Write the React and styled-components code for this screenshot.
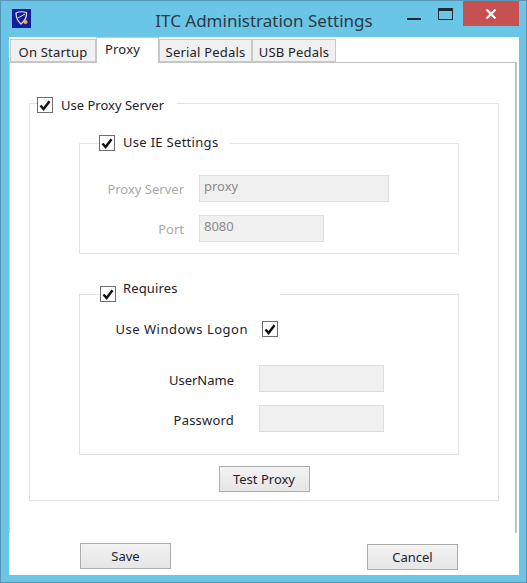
import React from 'react';
import styled, { createGlobalStyle } from 'styled-components';

const GlobalStyle = createGlobalStyle`
  html, body {
    margin: 0;
    padding: 0;
    background: #6bc5e6;
  }
`;

const Window = styled.div`
  box-sizing: border-box;
  width: 527px;
  height: 583px;
  display: flex;
  flex-direction: column;
  background: #6bc5e6;
  border: 1px solid #5597b4;
  font-family: "Noto Sans", "Open Sans", sans-serif;
  font-size: 13px;
  color: #22222a;
`;

const TitleBar = styled.div`
  position: relative;
  height: 36px;
  flex: none;
  display: flex;
  align-items: center;
  justify-content: center;
`;

const AppIcon = styled.svg`
  position: absolute;
  left: 11px;
  top: 8px;
`;

const Title = styled.div`
  font-size: 17px;
  color: #2c3a44;
  margin-top: 2px;
  margin-left: 1px;
`;

const Controls = styled.div`
  position: absolute;
  right: 7px;
  top: 0;
  display: flex;
  align-items: flex-start;
`;

const Minimize = styled.div`
  width: 14px;
  height: 2px;
  margin: 17px 17px 0 0;
  background: #1c2a33;
`;

const Maximize = styled.div`
  box-sizing: border-box;
  width: 15px;
  height: 12px;
  margin: 7px 10px 0 0;
  border: 1px solid #1c2a33;
  border-top-width: 3px;
`;

const Close = styled.div`
  width: 56px;
  height: 25px;
  background: #c75050;
  display: flex;
  align-items: center;
  justify-content: center;
`;

const Client = styled.div`
  flex: 1;
  margin: 0 7px 7px 8px;
  background: #fff;
  display: flex;
  flex-direction: column;
  min-height: 0;
`;

const TabStrip = styled.div`
  height: 25px;
  flex: none;
  display: flex;
  align-items: flex-end;
  padding-left: 1px;
  position: relative;
  z-index: 1;
`;

const Tab = styled.div`
  box-sizing: border-box;
  width: ${p => p.$width}px;
  height: ${p => (p.$active ? 26 : 23)}px;
  margin-bottom: ${p => (p.$active ? -1 : 0)}px;
  display: flex;
  justify-content: center;
  padding-top: ${p => (p.$active ? 2 : 3)}px;
  padding-right: ${p => (p.$active ? 10 : 0)}px;
  background: ${p => (p.$active ? '#fff' : '#f0f0f0')};
  border: 1px solid #c8c8c8;
  border-bottom: ${p => (p.$active ? 'none' : '1px solid #c8c8c8')};
  letter-spacing: 0.2px;
  white-space: nowrap;
`;

const TabPage = styled.div`
  box-sizing: border-box;
  height: 471px;
  flex: none;
  margin-right: 2px;
  padding: 34px 18px 0 19px;
  border-top: 1px solid #c4c4c4;
  border-left: 1px solid #d0d0d0;
  border-right: 2px solid #c4c4c4;
`;

const Group = styled.fieldset`
  box-sizing: border-box;
  margin: 0;
  width: ${p => p.$width}px;
  height: ${p => p.$height}px;
  min-width: 0;
  padding: 0;
  border: 1px solid #e3e3e3;
  display: flex;
  flex-direction: column;
`;

const Legend = styled.legend`
  box-sizing: border-box;
  width: ${p => p.$width}px;
  height: ${p => p.$height || 16}px;
  margin-left: ${p => p.$left}px;
  padding: 0;
  display: flex;
  align-items: flex-start;
  gap: ${p => p.$gap || 8}px;
  background: #fff;
  line-height: 16px;
`;

const LegendText = styled.span`
  position: relative;
  top: ${p => p.$raise || 0}px;
  letter-spacing: ${p => p.$spacing || 0}px;
  white-space: nowrap;
`;

const Box = styled.span`
  box-sizing: border-box;
  width: 16px;
  height: 16px;
  flex: none;
  display: flex;
  align-items: center;
  justify-content: center;
  background: #fff;
  border: 1px solid #6e6e6e;
`;

const Check = () => (
  <Box>
    <svg width="12" height="11" viewBox="0 0 12 11">
      <path d="M1.5 5.5 L4.6 9 L10.5 1.2" fill="none" stroke="#111" strokeWidth="2.5" />
    </svg>
  </Box>
);

const Row = styled.div`
  display: flex;
  align-items: center;
  height: 27px;
  margin-top: ${p => p.$top}px;
`;

const Label = styled.div`
  width: ${p => p.$width}px;
  padding-top: ${p => p.$drop || 0}px;
  text-align: right;
  letter-spacing: ${p => p.$spacing || 0}px;
  white-space: nowrap;
  color: ${p => (p.$disabled ? '#a9a9a9' : 'inherit')};
`;

const Field = styled.div`
  box-sizing: border-box;
  width: ${p => p.$width}px;
  height: 27px;
  margin-left: ${p => p.$gap}px;
  padding: 0 0 5px 4px;
  display: flex;
  align-items: center;
  background: #f0f0f0;
  border: 1px solid #dedede;
  color: #8b8b8b;
`;

const LogonRow = styled.div`
  display: flex;
  align-items: center;
  height: 16px;
  margin: 19px 0 0 34px;
`;

const LogonBox = styled.div`
  margin-left: 14px;
`;

const GroupGap = styled.div`
  height: ${p => p.$height}px;
`;

const CenterRow = styled.div`
  display: flex;
  justify-content: center;
  margin: ${p => p.$top}px 0 0 ${p => p.$left}px;
`;

const Button = styled.div`
  box-sizing: border-box;
  width: 91px;
  height: 26px;
  display: flex;
  align-items: center;
  justify-content: center;
  background: linear-gradient(#f2f2f2, #e6e6e6);
  border: 1px solid #adadad;
`;

const Footer = styled.div`
  flex: 1;
  display: flex;
  align-items: flex-start;
  justify-content: space-between;
  padding: 10px 61px 0 71px;
`;

const LowerButton = styled(Button)`
  margin-top: ${p => p.$top}px;
`;

const App = () => (
  <Window>
    <GlobalStyle />
    <TitleBar>
      <AppIcon width="19" height="19" viewBox="0 0 19 19">
        <rect width="19" height="19" fill="#141d9c" />
        <path d="M4 4 C7 2.5 11 2.5 14.5 3.5 C15 8 12 12.5 9 15 C6 12.5 4 8.5 4 4 Z" fill="none" stroke="#dfe4f5" strokeWidth="1.2" />
        <path d="M6 9 L13 5" stroke="#dfe4f5" strokeWidth="1" />
        <circle cx="13.5" cy="13" r="2" fill="#eeb23c" />
      </AppIcon>
      <Title>ITC Administration Settings</Title>
      <Controls>
        <Minimize />
        <Maximize />
        <Close>
          <svg width="12" height="10" viewBox="0 0 12 10">
            <path d="M1.5 0.5 L10.5 9.5 M10.5 0.5 L1.5 9.5" stroke="#fff" strokeWidth="2.2" />
          </svg>
        </Close>
      </Controls>
    </TitleBar>
    <Client>
      <TabStrip>
        <Tab $width={86}>On Startup</Tab>
        <Tab $width={63} $active>Proxy</Tab>
        <Tab $width={93}>Serial Pedals</Tab>
        <Tab $width={84}>USB Pedals</Tab>
      </TabStrip>
      <TabPage>
        <Group $width={470} $height={404}>
          <Legend $left={7} $width={140} $height={13}>
            <Check />
            <LegendText>Use Proxy Server</LegendText>
          </Legend>
          <GroupGap $height={25} />
          <CenterRow $top={0} $left={10}>
            <Group $width={380} $height={119}>
              <Legend $left={19} $width={131}>
                <Check />
                <LegendText $raise={-1} $spacing={0.3}>Use IE Settings</LegendText>
              </Legend>
              <Row $top={24}>
                <Label $width={104} $disabled>Proxy Server</Label>
                <Field $width={190} $gap={15}>proxy</Field>
              </Row>
              <Row $top={13}>
                <Label $width={104} $disabled>Port</Label>
                <Field $width={125} $gap={15}>8080</Field>
              </Row>
            </Group>
          </CenterRow>
          <CenterRow $top={32} $left={10}>
            <Group $width={380} $height={169}>
              <Legend $left={20} $width={180} $gap={7}>
                <Check />
                <LegendText $raise={-6} $spacing={0.15}>Requires</LegendText>
              </Legend>
              <LogonRow>
                <Label $width={134} $spacing={0.5}>Use Windows Logon</Label>
                <LogonBox><Check /></LogonBox>
              </LogonRow>
              <Row $top={28}>
                <Label $width={154} $drop={2}>UserName</Label>
                <Field $width={125} $gap={25} />
              </Row>
              <Row $top={13}>
                <Label $width={154} $drop={2} $spacing={0.2}>Password</Label>
                <Field $width={125} $gap={25} />
              </Row>
            </Group>
          </CenterRow>
          <CenterRow $top={11} $left={0}>
            <Button>Test Proxy</Button>
          </CenterRow>
        </Group>
      </TabPage>
      <Footer>
        <LowerButton $top={0}>Save</LowerButton>
        <LowerButton $top={1}>Cancel</LowerButton>
      </Footer>
    </Client>
  </Window>
);

export default App;
